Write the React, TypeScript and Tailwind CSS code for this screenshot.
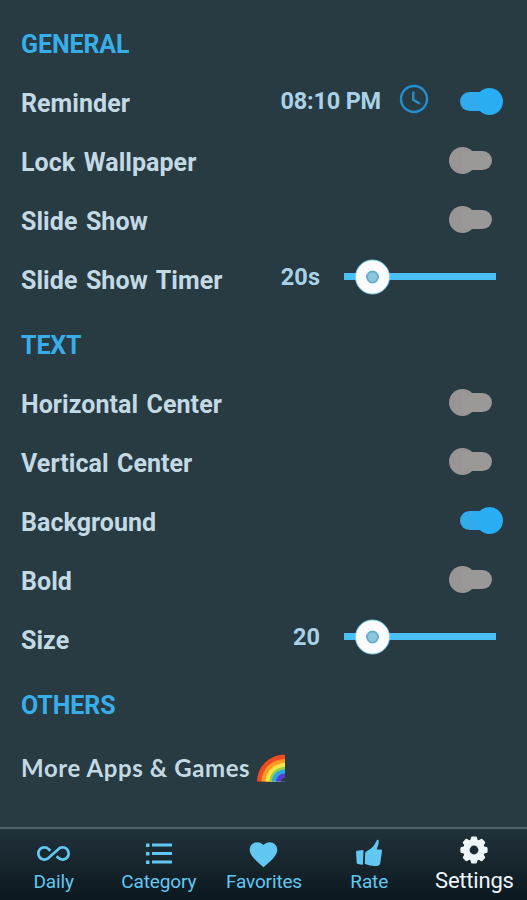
import { useState } from 'react'
import type { ReactNode } from 'react'
import { MdAllInclusive, MdFavorite } from 'react-icons/md'

function Heading({ children }: { children: ReactNode }) {
  return (
    <h2 className="flex h-[59px] items-center pt-0.5 text-[25px] font-bold tracking-[-0.1px] text-[#37aee9]">
      {children}
    </h2>
  )
}

function Row({ label, children }: { label: string; children?: ReactNode }) {
  return (
    <div className="flex h-[59px] items-center">
      <span className="flex-1 whitespace-nowrap pt-0.5 text-[#c3d9e4] [word-spacing:2.2px]">{label}</span>
      {children}
    </div>
  )
}

function Toggle({ on: initial = false }: { on?: boolean }) {
  const [on, setOn] = useState(initial)
  return (
    <button
      role="switch"
      aria-checked={on}
      onClick={() => setOn(!on)}
      className={
        on
          ? 'mr-6 mb-0.5 flex h-[27px] w-[43px] items-center'
          : 'mr-[35px] mb-0.5 flex h-[27px] w-[43px] flex-row-reverse items-center'
      }
    >
      <span className={on ? 'h-[19px] flex-1 rounded-l-full bg-[#2fabee]' : 'h-[19px] flex-1 rounded-r-full bg-[#9b9898]'} />
      <span className={on ? '-ml-3.5 size-[27px] rounded-full bg-[#29aef4]' : '-mr-3.5 size-[27px] rounded-full bg-[#999595]'} />
    </button>
  )
}

function Slider({ value }: { value: string }) {
  return (
    <>
      <span className="mr-6 mb-[3px] text-[23.5px] text-[#a9d2e8]">{value}</span>
      <div className="relative mr-[31px] mb-1.5 h-[7px] w-[152px] bg-[#4ac0f6]">
        <span className="absolute top-1/2 left-[11px] flex size-[35px] -translate-y-1/2 items-center justify-center rounded-full border border-[#7ed0ee] bg-[#fafcfd]">
          <span className="size-[13px] rounded-full border-2 border-[#68aecb] bg-[#8fc6dc]" />
        </span>
      </div>
    </>
  )
}

function Clock() {
  return (
    <svg viewBox="0 0 30 30" className="mr-[31px] mb-[7px] size-[30px]" fill="none" stroke="#248fce" strokeWidth="2.4">
      <circle cx="15" cy="15" r="13" />
      <path d="M14.3 7.5V15.8L20.8 19.8" />
    </svg>
  )
}

function Rainbow() {
  const bands = [
    ['#ef4b25', 27],
    ['#fb9a22', 22.5],
    ['#f9e547', 18.5],
    ['#8fd04b', 14.5],
    ['#2fa6e4', 12],
    ['#5a3ad6', 8],
  ] as const
  return (
    <svg viewBox="0 0 28 28" className="ml-[7px] h-7 w-7">
      {bands.map(([color, r]) => (
        <path key={color} d={`M28 ${27.5 - r}A${r + 1} ${r} 0 0 0 ${27 - r} 27.5H28Z`} fill={color} />
      ))}
      <path d="M28 24A4 3.5 0 0 0 24 27.5H28Z" fill="#283a42" />
    </svg>
  )
}

function ListIcon() {
  return (
    <svg viewBox="0 0 26 22" className="mt-0.5 h-[22px] w-[26px]" fill="currentColor">
      <path d="M0 .5h3.5V4H0zM0 9h3.5v3.5H0zM0 17.5h3.5V21H0zM6 .5h20v3H6zM6 9h20v3H6zM6 17.5h20v3H6z" />
    </svg>
  )
}

function ThumbIcon() {
  return (
    <svg viewBox="0 0 28 28" className="size-7" fill="currentColor">
      <path d="M2 11.8 7.7 11Q8.6 11 8.5 12L7.9 25Q7.8 26 6.8 25.7L2.8 25Q1.8 24.8 1.7 23.7L1 13Q1 12 2 11.8ZM10.2 13.5C12 11.5 17 10 19.5 5.5L22 1Q23.3 .2 23.7 1.8C24.3 5 22.3 8 21.8 10.5H26Q27.3 10.7 27 12L25.2 24.5Q24.8 26.2 23 26.7C19 27.5 14.5 27 9.8 24.8Z" />
    </svg>
  )
}

function GearIcon() {
  const teeth = [0, 45, 90, 135, 180, 225, 270, 315]
  return (
    <svg viewBox="-14 -14 28 28" className="size-7" fill="none" stroke="currentColor">
      <circle r="7.6" strokeWidth="6.4" />
      {teeth.map((angle) => (
        <path key={angle} d="M-3.8-9-3-12.6Q-2.8-13.6-1.8-13.6H1.8Q2.8-13.6 3-12.6L3.8-9Z" transform={`rotate(${angle})`} fill="currentColor" stroke="none" />
      ))}
    </svg>
  )
}

const TABS = [
  { label: 'Daily', icon: <MdAllInclusive className="size-[33px]" /> },
  { label: 'Category', icon: <ListIcon /> },
  { label: 'Favorites', icon: <MdFavorite className="mt-0.5 size-[33px]" /> },
  { label: 'Rate', icon: <ThumbIcon /> },
  { label: 'Settings', icon: <GearIcon /> },
]

export default function App() {
  const [active, setActive] = useState('Settings')

  return (
    <div className="flex h-[900px] w-[527px] flex-col overflow-hidden bg-[#283a42] font-['Roboto',sans-serif]">
      <main className="flex-1 pt-[14px] pl-[21px] text-[25px] font-bold tracking-[0.05px]">
        <section>
          <Heading>GENERAL</Heading>
          <Row label="Reminder">
            <span className="mr-[18px] mb-0.5 text-[23.5px] tracking-[-0.2px] text-[#a9d2e8]">08:10 PM</span>
            <Clock />
            <Toggle on />
          </Row>
          <Row label="Lock Wallpaper"><Toggle /></Row>
          <Row label="Slide Show"><Toggle /></Row>
          <Row label="Slide Show Timer"><Slider value="20s" /></Row>
        </section>

        <section className="pt-1.5">
          <Heading>TEXT</Heading>
          <Row label="Horizontal Center"><Toggle /></Row>
          <Row label="Vertical Center"><Toggle /></Row>
          <Row label="Background"><Toggle on /></Row>
          <Row label="Bold"><Toggle /></Row>
          <Row label="Size"><Slider value="20" /></Row>
        </section>

        <section className="pt-1.5">
          <Heading>OTHERS</Heading>
          <a href="#" className="flex h-[67px] items-center font-['Lato',sans-serif] text-[24px] tracking-[0.6px] text-[#c3d9e4]">
            More Apps &amp; Games
            <Rainbow />
          </a>
        </section>
      </main>

      <nav className="grid h-[73px] shrink-0 grid-cols-5 border-t-2 border-[#50636a] bg-linear-to-b from-[#22323a] to-[#0c1820] pl-px">
        {TABS.map(({ label, icon }) => (
          <button
            key={label}
            onClick={() => setActive(label)}
            className={
              active === label
                ? 'flex flex-col items-center pt-[7px] text-[22px] tracking-[-0.2px] text-[#eef6fa]'
                : 'flex flex-col items-center pt-2.5 text-[19px] tracking-[-0.15px] text-[#62c8f2]'
            }
          >
            <span className="flex h-7 items-center">{icon}</span>
            <span className={active === label ? 'leading-[34px]' : 'leading-[30px]'}>{label}</span>
          </button>
        ))}
      </nav>
    </div>
  )
}
